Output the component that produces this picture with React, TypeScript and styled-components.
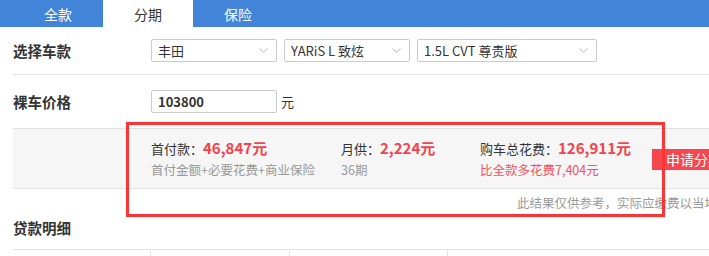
import React from 'react'
import styled, {createGlobalStyle} from 'styled-components'

const GlobalStyle = createGlobalStyle`
  html, body {
    margin: 0;
    padding: 0;
    overflow: hidden;
    background: #fff;
  }
  body {
    font-family: "Microsoft YaHei", "Noto Sans CJK SC", sans-serif;
    color: #333;
  }
`

const Page = styled.div`
  position: relative;
  width: 760px;
`

const TabBar = styled.nav`
  display: flex;
  height: 27px;
  padding-left: 13px;
  background: #4285d8;
`

const Tab = styled.div<{$active?: boolean}>`
  width: 90px;
  display: flex;
  align-items: center;
  justify-content: center;
  font-size: 14px;
  color: ${p => (p.$active ? '#333' : '#fff')};
  background: ${p => (p.$active ? '#fff' : 'transparent')};
`

const Body = styled.section`
  margin-left: 13px;
`

const FormRow = styled.div<{$height: number}>`
  display: flex;
  align-items: center;
  height: ${p => p.$height}px;
  border-bottom: 1px solid #e3e3e3;
`

const Label = styled.div`
  width: 138px;
  font-size: 14.5px;
  font-weight: bold;
  color: #333;
`

const Controls = styled.div`
  display: flex;
  align-items: center;
  gap: 7px;
`

const Select = styled.div<{$width: number}>`
  position: relative;
  box-sizing: border-box;
  width: ${p => p.$width}px;
  height: 23px;
  border: 1px solid #ccc;
  border-radius: 2px;
  padding-left: 6px;
  display: flex;
  align-items: center;
  font-size: 13px;
  color: #333;
  svg {
    position: absolute;
    right: 8px;
    top: 8px;
  }
`

const PriceInput = styled.div`
  box-sizing: border-box;
  width: 126px;
  height: 23px;
  border: 1px solid #ccc;
  border-radius: 2px;
  padding-left: 6px;
  display: flex;
  align-items: center;
  font-size: 13px;
  font-weight: bold;
  color: #333;
`

const Unit = styled.span`
  font-size: 13px;
  margin-left: -3px;
`

const Result = styled.div`
  display: flex;
  align-items: center;
  height: 59px;
  padding-left: 138px;
  background: #f6f6f6;
  border-bottom: 1px solid #e3e3e3;
`

const Stat = styled.div<{$width: number}>`
  width: ${p => p.$width}px;
  display: flex;
  flex-direction: column;
  gap: 3px;
`

const StatTitle = styled.div`
  font-size: 13px;
  color: #333;
  line-height: 18px;
  b {
    font-size: 15px;
    color: #f5424b;
  }
`

const StatNote = styled.div<{$red?: boolean}>`
  font-size: 12.5px;
  line-height: 17px;
  color: ${p => (p.$red ? '#f5505a' : '#999')};
`

const ApplyButton = styled.div`
  width: 90px;
  height: 21px;
  margin-top: 1px;
  background: #f5474f;
  color: #fff;
  font-size: 14px;
  display: flex;
  align-items: center;
  padding-left: 14px;
  box-sizing: border-box;
`

const Footnote = styled.div`
  height: 26px;
  display: flex;
  align-items: center;
  padding-left: 504px;
  font-size: 12.5px;
  color: #999;
  white-space: nowrap;
`

const SectionTitle = styled.h3`
  margin: 0;
  height: 34px;
  padding-top: 3px;
  box-sizing: border-box;
  line-height: 20px;
  font-size: 14.5px;
  font-weight: bold;
  color: #333;
`

const Table = styled.div`
  display: grid;
  grid-template-columns: 137px 139px 158px 1fr;
  border-top: 1px solid #e3e3e3;
  height: 20px;
`

const Cell = styled.div`
  border-left: 1px solid #e3e3e3;
  &:first-child {
    border-left: none;
  }
`

const Annotation = styled.div`
  position: absolute;
  left: 126px;
  top: 122px;
  width: 539px;
  height: 95px;
  box-sizing: border-box;
  border: 3px solid #fb3434;
  pointer-events: none;
`

const Chevron = () => (
  <svg width="9" height="5" viewBox="0 0 9 5">
    <path d="M0.5 0.5 L4.5 4.3 L8.5 0.5" fill="none" stroke="#bbb" strokeWidth="1" />
  </svg>
)

export default function App() {
  return (
    <Page>
      <GlobalStyle />
      <TabBar>
        <Tab>全款</Tab>
        <Tab $active>分期</Tab>
        <Tab>保险</Tab>
      </TabBar>
      <Body>
        <FormRow $height={47}>
          <Label>选择车款</Label>
          <Controls>
            <Select $width={126}>丰田<Chevron /></Select>
            <Select $width={126}>YARiS L 致炫<Chevron /></Select>
            <Select $width={180}>1.5L CVT 尊贵版<Chevron /></Select>
          </Controls>
        </FormRow>
        <FormRow $height={53}>
          <Label>裸车价格</Label>
          <Controls>
            <PriceInput>103800</PriceInput>
            <Unit>元</Unit>
          </Controls>
        </FormRow>
        <Result>
          <Stat $width={190}>
            <StatTitle>首付款：<b>46,847元</b></StatTitle>
            <StatNote>首付金额+必要花费+商业保险</StatNote>
          </Stat>
          <Stat $width={139}>
            <StatTitle>月供：<b>2,224元</b></StatTitle>
            <StatNote>36期</StatNote>
          </Stat>
          <Stat $width={172}>
            <StatTitle>购车总花费：<b>126,911元</b></StatTitle>
            <StatNote $red>比全款多花费7,404元</StatNote>
          </Stat>
          <ApplyButton>申请分期</ApplyButton>
        </Result>
        <Footnote>此结果仅供参考，实际应缴费以当地为准</Footnote>
        <SectionTitle>贷款明细</SectionTitle>
        <Table>
          <Cell />
          <Cell />
          <Cell />
          <Cell />
        </Table>
      </Body>
      <Annotation />
    </Page>
  )
}
